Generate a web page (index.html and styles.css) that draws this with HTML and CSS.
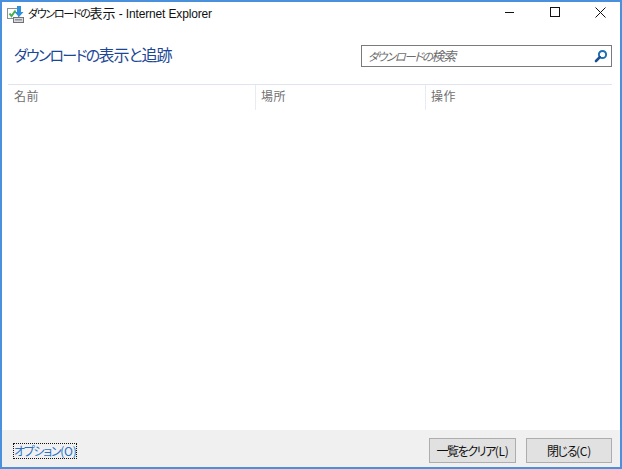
FILE: index.html
```html
<!DOCTYPE html>
<html lang="ja">
<head>
<meta charset="utf-8">
<title>ダウンロードの表示 - Internet Explorer</title>
<link rel="stylesheet" href="styles.css">
</head>
<body>
<div class="window">
  <div class="titlebar">
    <svg class="app-icon" width="17" height="17" viewBox="0 0 17 17">
      <rect x="0.500" y="2.500" width="11" height="10" fill="#fff" stroke="#8a8f96"/>
      <path d="M2.500 7.500l2 2.500 4-5.500" fill="none" stroke="#45b04a" stroke-width="2"/>
      <rect x="6.500" y="11.500" width="10" height="5" fill="#d8dade" stroke="#6e7278"/>
      <rect x="8" y="13" width="7" height="1.500" fill="#8f9499"/>
      <path d="M10 0h4v6h2.500l-4.500 5-4.500-5h2.500z" fill="#2f8fd8"/>
    </svg>
    <span class="title-text"><span class="title-kana">ダウンロードの</span>表示<span class="latin"> - Internet Explorer</span></span>
    <div class="controls">
      <svg width="11" height="11" viewBox="0 0 11 11"><path d="M0 5.500h9" stroke="#111" fill="none"/></svg>
      <svg width="11" height="11" viewBox="0 0 11 11"><rect x="0.500" y="0.500" width="9" height="9" fill="none" stroke="#111"/></svg>
      <svg width="11" height="11" viewBox="0 0 11 11"><path d="M0.500 0.500l10 10M10.500 0.500l-10 10" stroke="#111" fill="none"/></svg>
    </div>
  </div>
  <div class="header">
    <h1 class="heading"><span class="heading-kana">ダウンロードの</span>表示と追跡</h1>
    <div class="search">
      <span class="search-text"><span class="search-kana">ダウンロードの</span>検索</span>
      <svg class="search-icon" width="14" height="14" viewBox="0 0 14 14">
        <circle cx="8.500" cy="5.500" r="3.600" fill="#fff" stroke="#1f6fb5" stroke-width="2"/>
        <path d="M5.800 8.200L2 12" stroke="#1c4f8f" stroke-width="2.600" stroke-linecap="round"/>
      </svg>
    </div>
  </div>
  <div class="columns">
    <div class="col col-name">名前</div>
    <div class="col col-place">場所</div>
    <div class="col col-action">操作</div>
  </div>
  <div class="list"></div>
  <div class="footer">
    <a class="options">オプション<span class="latin">(O)</span></a>
    <div class="buttons">
      <button class="btn btn-clear">一覧をクリア<span class="latin">(L)</span></button>
      <button class="btn btn-close">閉じる<span class="latin">(C)</span></button>
    </div>
  </div>
</div>
</body>
</html>
```
FILE: styles.css
```css
html, body {
  margin: 0;
  padding: 0;
}
body {
  width: 622px;
  height: 469px;
  overflow: hidden;
  font-family: "Noto Sans CJK JP", "Liberation Sans", sans-serif;
  font-feature-settings: "palt";
}
.latin {
  letter-spacing: -0.3px;
}
.window {
  box-sizing: border-box;
  width: 622px;
  height: 469px;
  border: 2px solid #4a90dc;
  background: #fff;
  display: flex;
  flex-direction: column;
}
.titlebar {
  height: 24px;
  display: flex;
  align-items: center;
  padding-left: 5px;
  flex: none;
}
.app-icon {
  margin-right: 4px;
  flex: none;
}
.title-text {
  font-size: 13px;
  line-height: 18px;
  margin-bottom: 2px;
  color: #111;
}
.title-kana {
  font-size: 11px;
  letter-spacing: -1.3px;
}
.title-text .latin {
  font-family: "Liberation Sans", sans-serif;
  font-size: 12px;
  letter-spacing: -0.15px;
}
.controls {
  margin-left: auto;
  margin-bottom: 4px;
  display: flex;
  gap: 34px;
  padding-right: 14px;
}
.header {
  height: 58px;
  display: flex;
  justify-content: space-between;
  align-items: flex-start;
  padding: 17px 8px 0 12px;
  flex: none;
  box-sizing: border-box;
}
.heading {
  margin: 0;
  font-size: 16px;
  line-height: 22px;
  font-weight: 400;
  color: #1c4796;
  letter-spacing: -1px;
}
.heading-kana {
  font-size: 15px;
  letter-spacing: -1.7px;
}
.search {
  box-sizing: border-box;
  width: 251px;
  height: 22px;
  margin-top: 2px;
  border: 1px solid #7a7a7a;
  display: flex;
  align-items: center;
  justify-content: space-between;
  padding: 0 3px 0 6px;
}
.search-text {
  font-size: 13px;
  line-height: 18px;
  font-style: italic;
  color: #6d6d6d;
  letter-spacing: -1px;
}
.search-kana {
  font-size: 11.5px;
  letter-spacing: -1.5px;
}
.columns {
  margin: 0 8px 0 6px;
  display: flex;
  height: 25px;
  border-top: 1px solid #dfe4ee;
  flex: none;
}
.col {
  box-sizing: border-box;
  font-size: 12px;
  line-height: 21px;
  color: #6f6f6f;
  padding-left: 5px;
  letter-spacing: 0.5px;
}
.col-name {
  width: 247px;
  padding-left: 6px;
}
.col-place {
  width: 170px;
  border-left: 1px solid #e8ebf1;
}
.col-action {
  flex: 1;
  border-left: 1px solid #e8ebf1;
}
.list {
  flex: 1;
}
.footer {
  height: 37px;
  flex: none;
  background: #f0f0f0;
  display: flex;
  align-items: flex-start;
  justify-content: space-between;
  padding: 8px 8px 0 12px;
  box-sizing: border-box;
}
.options {
  margin-top: 6px;
  font-size: 12px;
  line-height: 14px;
  color: #2a72c4;
  outline: 1px dotted #111;
  letter-spacing: -1.3px;
}
.buttons {
  display: flex;
  gap: 10px;
}
.btn {
  box-sizing: border-box;
  width: 87px;
  height: 25px;
  padding: 0;
  border: 1px solid #adadad;
  background: #e1e1e1;
  font-family: inherit;
  font-feature-settings: "palt";
  font-size: 12px;
  color: #111;
  letter-spacing: -1.4px;
}
.btn-close {
  width: 86px;
}
```
